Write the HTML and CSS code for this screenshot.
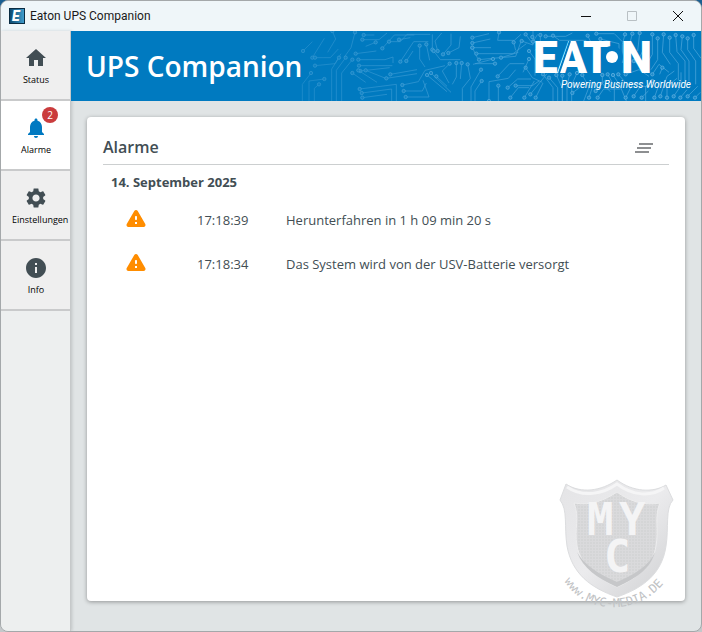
FILE: index.html
```
<!DOCTYPE html>
<html lang="de">
  <head>
    <meta charset="UTF-8" />
    <meta name="viewport" content="width=device-width, initial-scale=1.0" />
    <title>Eaton UPS Companion</title>
    <link rel="stylesheet" href="styles.css">
  </head>
  <body>
    <div class="window">
      <div class="titlebar">
        <svg class="app-icon" viewBox="0 0 16 16" aria-hidden="true">
          <defs>
            <linearGradient id="appBlue" x1="0" y1="0" x2="1" y2="0">
              <stop offset="0" stop-color="#0d4a70" />
              <stop offset="1" stop-color="#3f9bcb" />
            </linearGradient>
          </defs>
          <rect width="16" height="16" fill="#0a2c42" />
          <rect x="1" y="1" width="14" height="14" fill="url(#appBlue)" />
          <text x="3" y="13" class="app-letter">E</text>
        </svg>
        <span class="titlebar-text">Eaton UPS Companion</span>
        <div class="window-buttons">
          <button type="button" aria-label="Minimieren">
            <svg viewBox="0 0 12 12"><path d="M1 6.500h10" /></svg>
          </button>
          <button type="button" aria-label="Maximieren" disabled>
            <svg viewBox="0 0 12 12"><path d="M1.500 1.500h9v9h-9z" /></svg>
          </button>
          <button type="button" aria-label="Schließen">
            <svg viewBox="0 0 12 12"><path d="M1 1l10 10M11 1L1 11" /></svg>
          </button>
        </div>
      </div>

      <div class="layout">
        <nav class="sidebar">
          <a href="#status" class="nav-item">
            <svg class="icon" viewBox="0 0 24 24"><path d="M10 20v-6h4v6h5v-8h3L12 3 2 12h3v8z" /></svg>
            <span class="nav-label">Status</span>
          </a>
          <a href="#alarme" class="nav-item active">
            <svg class="icon" viewBox="0 0 24 24"><path d="M12 22c1.100 0 2-.9 2-2h-4c0 1.100.89 2 2 2zm6-6v-5c0-3.070-1.640-5.640-4.500-6.320V4c0-.83-.67-1.500-1.500-1.500s-1.500.67-1.500 1.500v.68C7.630 5.360 6 7.920 6 11v5l-2 2v1h16v-1l-2-2z" /></svg>
            <span class="nav-label">Alarme</span>
            <span class="badge">2</span>
          </a>
          <a href="#einstellungen" class="nav-item">
            <svg class="icon" viewBox="0 0 24 24"><path d="M19.140 12.940c.04-.3.060-.61.060-.94 0-.32-.020-.64-.070-.94l2.030-1.580c.18-.14.23-.41.12-.61l-1.920-3.320c-.12-.22-.37-.29-.59-.22l-2.390.96c-.5-.38-1.030-.7-1.620-.94l-.36-2.540c-.040-.24-.24-.41-.48-.41h-3.840c-.24 0-.43.17-.47.41l-.36 2.540c-.59.24-1.130.57-1.620.94l-2.390-.96c-.22-.080-.47 0-.59.22L2.740 8.870c-.12.21-.080.47.12.61l2.030 1.580c-.050.3-.090.63-.090.94s.020.64.070.94l-2.030 1.580c-.18.14-.23.41-.12.61l1.920 3.320c.12.22.37.29.59.22l2.390-.96c.5.38 1.030.7 1.620.94l.36 2.540c.050.24.24.41.48.41h3.840c.24 0 .44-.17.47-.41l.36-2.540c.59-.24 1.130-.56 1.620-.94l2.390.96c.22.080.47 0 .59-.22l1.920-3.320c.12-.22.070-.47-.12-.61l-2.010-1.580zM12 15.600c-1.980 0-3.600-1.620-3.600-3.600s1.620-3.600 3.600-3.600 3.600 1.620 3.600 3.600-1.620 3.600-3.600 3.600z" /></svg>
            <span class="nav-label">Einstellungen</span>
          </a>
          <a href="#info" class="nav-item">
            <svg class="icon" viewBox="0 0 24 24"><path d="M12 2C6.480 2 2 6.480 2 12s4.480 10 10 10 10-4.480 10-10S17.520 2 12 2zm1 15h-2v-6h2v6zm0-8h-2V7h2v2z" /></svg>
            <span class="nav-label">Info</span>
          </a>
        </nav>

        <div class="content">
          <header class="banner">
            <!-- circuit board lines, fading out to the left -->
            <svg class="circuit" viewBox="0 0 1206 210" preserveAspectRatio="xMaxYMid slice" aria-hidden="true">
              <defs>
                <marker id="node" markerUnits="userSpaceOnUse" markerWidth="16" markerHeight="16" refX="8" refY="8">
                  <circle cx="8" cy="8" r="5" />
                </marker>
                <linearGradient id="fade" x1="0" x2="1" y1="0" y2="0">
                  <stop offset="0" stop-color="#777" />
                  <stop offset="0.4" stop-color="#ccc" />
                  <stop offset="0.8" stop-color="#fff" />
                </linearGradient>
                <mask id="fadeMask" maskUnits="userSpaceOnUse" x="0" y="0" width="1206" height="210">
                  <rect width="1206" height="210" fill="url(#fade)" />
                </mask>
              </defs>
              <g mask="url(#fadeMask)" class="traces">
                <path d="M12 60L40 32" /><path d="M40 80L76 22" /><path d="M48 80h46l24-26" />
                <path d="M48 104l60-6 18-30" /><path d="M100 0l10 24-24 40" /><path d="M168 4l-12 46-20 28" />
                <path d="M120 80l-22 34v96" /><path d="M140 80l-28 38v92" /><path d="M160 86l-32 40v84" />
                <path d="M36 126L10 160v50" /><path d="M76 144L30 150v60" /><path d="M60 160l-14 12v38" />
                <path d="M190 26h50l24-20" /><path d="M194 12h32" /><path d="M170 68l62-8" />
                <path d="M230 34l-30 12" /><path d="M250 52l36-40h60" /><path d="M270 32h34l20-22h70" />
                <path d="M300 26l34-6" /><path d="M178 86h80l24-8v18" /><path d="M180 104h100" />
                <path d="M184 120l88-10" /><path d="M304 92l40-60h44" /><path d="M322 90l20-30" />
                <path d="M160 126l40 28" /><path d="M178 118l56 36" /><path d="M200 118l60 24" />
                <path d="M274 130l80-14" /><path d="M262 142l92-14" /><path d="M310 162l48-10 20-34 60-14" />
                <path d="M314 180h56l12-24" /><path d="M182 174l110-14v50" /><path d="M188 186l90-12v36" />
                <path d="M190 200l74-10" /><path d="M320 198h70l-18-50" /><path d="M362 44v40l16 24" />
                <path d="M382 40l10 48" /><path d="M400 56V10" /><path d="M416 60l-8-30 20-24" />
                <path d="M432 70l24-28V8" /><path d="M448 66l32-16 4-34" /><path d="M404 60l20 26h60" />
                <path d="M384 132l60 50" /><path d="M396 126l60 58" /><path d="M412 136l32 30" />
                <path d="M452 98l-22 22 20 36" /><path d="M472 96v42l-12 22" /><path d="M488 96l-4 48" />
                <path d="M506 100l8 42-24 30v38" /><path d="M520 20l50-12" /><path d="M520 36l54-12" />
                <path d="M520 50h56" /><path d="M520 50l16 32" /><path d="M532 68h110l40-30" />
                <path d="M540 86l40-4 70-6 16-44" /><path d="M546 116l-30 52v42" /><path d="M582 84l-60 16" />
                <path d="M588 98h-60" /><path d="M596 136l36-38h44" /><path d="M606 80l52-16" />
                <path d="M548 150l-20 30v30" /><path d="M570 210v-58l58-10 22-26" /><path d="M598 164v46" />
                <path d="M626 170l30-26h40" /><path d="M634 200l24-30h32" /><path d="M650 164h50l20-14" />
                <path d="M600 4l-4 24h50l20-18" /><path d="M644 34l6 24" /><path d="M668 30l34 12V0" />
                <path d="M680 10l16 22" /><path d="M702 32l14-22" /><path d="M690 60l18 24v50" />
                <path d="M680 110l20 30 30 14" /><path d="M676 200l30-50" /><path d="M694 190l50-62" />
                <path d="M710 200l22-44" /><path d="M724 12v30l-16 16" /><path d="M740 16h60l20-10" />
                <path d="M762 14l20 14h80" /><path d="M732 130l30 40v40" /><path d="M750 140l26 30v40" />
                <path d="M772 132l18 40v38" /><path d="M790 134v76" /><path d="M812 130l-8 34v46" />
                <path d="M834 126l-16 36v48" /><path d="M850 132l20 36-16 42" /><path d="M866 14l10 20 40 6" />
                <path d="M892 8h54l24 24" /><path d="M904 24l56 14v50" /><path d="M910 132v26l24 24" />
                <path d="M926 130l20 36v44" /><path d="M942 132l20 30 20 48" /><path d="M896 200l18-26h50" />
                <path d="M890 180l30-34" /><path d="M958 130l26 30h40" /><path d="M978 10l-8 30v56" />
                <path d="M1000 8l-8 32 16 30" /><path d="M1022 6l-6 54" /><path d="M980 130l40-14 30 20" />
                <path d="M1060 10v60l-14 24" /><path d="M1076 22v64l-20 30" /><path d="M1094 10l-4 54 24 36" />
                <path d="M1112 20v44l26 34v50" /><path d="M1130 12l4 50 24 28v60" /><path d="M1150 16l-4 40 24 34v60" />
                <path d="M1166 22v34l24 34v70" /><path d="M1184 12v40l22 30" /><path d="M1060 130l20-30 30 24" />
                <path d="M1066 200l18-50" /><path d="M1084 196l20-60 22-16" /><path d="M1104 200v-34l30-24" />
                <path d="M1124 196l22-32v-40" /><path d="M1144 200l20-24" /><path d="M1166 196l30-30" />
                <path d="M1188 200l16-16" /><path d="M980 200l22-44h30" /><path d="M1004 196l20-30h30" />
                <path d="M1028 200l20-20" /><path d="M820 186l26-20" /><path d="M870 200l16-50" />
                <path d="M700 18l34 50v40" /><path d="M690 84l-18 40" /><path d="M1040 40l-20 44 20 16" />
                <path d="M1060 150l-20 16v44" /><path d="M1004 90l24 16" /><path d="M1090 110l-8 20" />
              </g>
            </svg>
            <h1>UPS Companion</h1>
            <div class="brand">
              <svg class="brand-logo" viewBox="0 0 118 32" role="img" aria-label="Eaton">
                <text x="-2" y="32">E</text>
                <text x="22" y="32">A</text>
                <text x="48" y="32">T</text>
                <path class="brand-cut" d="M35 0L24 32" />
                <circle class="brand-ring" cx="77" cy="16" r="11" />
                <circle class="brand-dot" cx="77" cy="16" r="6" />
                <text x="86" y="32">N</text>
              </svg>
              <span class="brand-claim">Powering Business Worldwide</span>
            </div>
          </header>

          <main class="page">
            <section class="card">
              <div class="card-header">
                <h2>Alarme</h2>
                <button type="button" class="clear-button" aria-label="Alle Alarme löschen">
                  <svg viewBox="0 0 24 24"><path d="M5 13h14v-2H5v2zm-2 4h14v-2H3v2zM7 7v2h14V7H7z" /></svg>
                </button>
              </div>
              <table class="alarms">
                <caption>14. September 2025</caption>
                <tbody>
                  <tr>
                    <td class="alarm-icon">
                      <svg viewBox="0 0 24 24"><path d="M4.470 21h15.060c1.540 0 2.500-1.670 1.730-3L13.730 4.990c-.77-1.330-2.690-1.330-3.460 0L2.740 18c-.77 1.330.19 3 1.730 3zM12 14c-.55 0-1-.45-1-1v-2c0-.55.45-1 1-1s1 .45 1 1v2c0 .55-.45 1-1 1zm1 4h-2v-2h2v2z" /></svg>
                    </td>
                    <td class="alarm-time">17:18:39</td>
                    <td>Herunterfahren in 1 h 09 min 20 s</td>
                  </tr>
                  <tr>
                    <td class="alarm-icon">
                      <svg viewBox="0 0 24 24"><path d="M4.470 21h15.060c1.540 0 2.500-1.670 1.730-3L13.730 4.990c-.77-1.330-2.690-1.330-3.460 0L2.740 18c-.77 1.330.19 3 1.730 3zM12 14c-.55 0-1-.45-1-1v-2c0-.55.45-1 1-1s1 .45 1 1v2c0 .55-.45 1-1 1zm1 4h-2v-2h2v2z" /></svg>
                    </td>
                    <td class="alarm-time">17:18:34</td>
                    <td>Das System wird von der USV-Batterie versorgt</td>
                  </tr>
                </tbody>
              </table>
            </section>
          </main>
        </div>
      </div>

      <!-- watermark -->
      <svg class="watermark" viewBox="0 0 120 136" role="img" aria-label="myc-media.de">
        <defs>
          <linearGradient id="rim" x1="0" y1="0" x2="1" y2="1">
            <stop offset="0" stop-color="#e4e4e6" />
            <stop offset="0.5" stop-color="#ebebed" />
            <stop offset="1" stop-color="#cfd0d2" />
          </linearGradient>
          <pattern id="mesh" width="3" height="3" patternUnits="userSpaceOnUse">
            <rect width="3" height="3" fill="#dadadc" />
            <circle cx="1" cy="1" r="0.8" fill="#cecfd0" />
          </pattern>
          <path id="claimArc" d="M7 105C30 142 90 140 113 98" />
        </defs>
        <path d="M9 8C24 18 44 15 60 4C76 16 96 17 109 9L116 24C108 32 112 52 109 70C105 98 86 112 60 121C34 112 15 98 10 70C7 50 11 34 3 24Z" fill="url(#rim)" stroke="#dcdddf" />
        <path d="M10 11C26 22 46 18 60 8C76 20 94 21 107 12" fill="none" stroke="#f5f5f6" stroke-width="3" />
        <path d="M17 27C34 30 48 24 60 16C72 25 87 30 103 27C97 40 102 54 99 70C96 90 80 102 60 111C40 102 24 90 20 70C17 52 23 42 17 27Z" fill="url(#mesh)" stroke="#ededee" />
        <path d="M20 76C26 92 40 102 60 111C80 102 94 92 98 76C92 90 78 98 60 106C42 98 28 90 20 76Z" fill="#c6c7c9" />
        <g class="shield-letters">
          <text x="30" y="59">M</text>
          <text x="62" y="59">Y</text>
          <text x="47" y="96">C</text>
        </g>
        <text class="shield-claim"><textPath href="#claimArc">www.MYC-MEDIA.DE</textPath></text>
      </svg>
    </div>
  </body>
</html>
```

FILE: styles.css
```
* {
  box-sizing: border-box;
}
body {
  margin: 0;
  font-family: "Open Sans", "Noto Sans", sans-serif;
  font-size: 13px;
  color: #424e54;
  background: linear-gradient(#1b5f91 0 11%, #b9bdc0 11% 76%, #285680 76% 91%, #c4c8ca 91%);
}
.window {
  position: relative;
  display: flex;
  flex-direction: column;
  min-height: 100vh;
  border: 1px solid #a4a8aa;
  border-radius: 8px;
  overflow: hidden;
  background-color: #e0e4e5;
}
.titlebar {
  display: flex;
  align-items: center;
  height: 30px;
  padding-left: 8px;
  background-color: #eff6f9;
  color: #1a1a1a;
}
.app-icon {
  width: 16px;
  height: 16px;
}
.app-letter {
  font: italic 900 14px "Roboto", sans-serif;
  fill: #fff;
}
.titlebar-text {
  flex: 1;
  margin-left: 5px;
  font-family: "Roboto", sans-serif;
  font-size: 12px;
}
.window-buttons {
  display: flex;
}
.window-buttons button {
  display: flex;
  align-items: center;
  justify-content: center;
  width: 46px;
  height: 30px;
  padding: 0;
  border: none;
  background: none;
}
.window-buttons svg {
  width: 12px;
  height: 12px;
  fill: none;
  stroke: #111;
}
.window-buttons button:disabled svg {
  stroke: #b9c0c4;
}
.layout {
  display: flex;
  flex: 1;
}

.sidebar {
  flex: 0 0 70px;
  background-color: #edefef;
  border-right: 1px solid #c6c9ca;
  box-shadow: 1px 0 3px rgba(0, 0, 0, 0.15);
}
.nav-item {
  position: relative;
  display: flex;
  flex-direction: column;
  align-items: center;
  height: 70px;
  padding: 15px 0 0 1px;
  border-bottom: 2px solid #c9cacb;
  background-color: #efefef;
  color: #000;
  font-size: 9px;
  line-height: 20px;
  text-decoration: none;
}
.nav-item.active {
  background-color: #fff;
}
/* long labels run out to the right */
.nav-label {
  width: 48px;
  text-align: center;
  white-space: nowrap;
}
.icon {
  width: 24px;
  height: 24px;
  fill: #424e54;
}
.active .icon {
  fill: #0079c1;
}
.badge {
  position: absolute;
  top: 6px;
  right: 12px;
  width: 16px;
  height: 16px;
  border-radius: 50%;
  background-color: #ca3c3d;
  color: #fff;
  font-size: 10px;
  line-height: 16px;
  text-align: center;
}

.content {
  display: flex;
  flex: 1;
  flex-direction: column;
}
.banner {
  position: relative;
  display: flex;
  align-items: center;
  justify-content: space-between;
  height: 70px;
  padding: 0 10px 0 15px;
  background-color: #007ac0;
  color: #fff;
  overflow: hidden;
}
.circuit {
  position: absolute;
  top: 0;
  right: 0;
  height: 100%;
}
.traces path {
  fill: none;
  stroke: #55abde;
  stroke-width: 2;
  marker-start: url(#node);
}
.circuit marker circle {
  fill: #1f8bcb;
  stroke: #6cb8e4;
  stroke-width: 2;
}
.banner h1 {
  position: relative;
  margin: 0;
  font-size: 28px;
  font-weight: 600;
}
.brand {
  position: relative;
  display: flex;
  flex-direction: column;
  align-items: flex-end;
}
.brand-logo {
  width: 118px;
  height: 32px;
  margin-right: 38px;
  font: 900 44px "Roboto", sans-serif;
  fill: #fff;
  overflow: visible;
}
.brand-cut {
  fill: none;
  stroke: #0079c1;
  stroke-width: 2;
}
.brand-ring {
  fill: #0079c1;
}
.brand-dot {
  fill: #fff;
}
.brand-claim {
  margin-top: 5px;
  font: italic 10px/14px "Roboto", sans-serif;
}

.page {
  display: flex;
  flex: 1;
  padding: 16px 16px 30px;
}
.card {
  flex: 1;
  padding: 16px;
  border-radius: 4px;
  background-color: #fff;
  box-shadow: 0 1px 4px rgba(0, 0, 0, 0.35);
}
.card-header {
  display: flex;
  align-items: center;
  justify-content: space-between;
  height: 32px;
  padding: 0 13px 2px 0;
  border-bottom: 1px solid #cccfd0;
}
.card-header h2 {
  margin: 0;
  padding-bottom: 2px;
  font-size: 16px;
  font-weight: 600;
  line-height: 24px;
}
.clear-button {
  display: flex;
  padding: 0;
  border: none;
  background: none;
}
.clear-button svg {
  width: 24px;
  height: 24px;
  fill: #8d8f91;
}
.alarms {
  width: 100%;
  border-collapse: collapse;
}
.alarms caption {
  padding: 7px 8px 6px;
  font-weight: 700;
  line-height: 20px;
  text-align: left;
}
.alarms td {
  height: 44px;
  padding: 0;
}
.alarms .alarm-icon {
  width: 94px;
  padding: 0 0 4px 21px;
}
.alarm-icon svg {
  display: block;
  width: 24px;
  height: 24px;
  fill: #ff8d00;
}
.alarms .alarm-time {
  width: 89px;
}

.watermark {
  position: absolute;
  right: 24px;
  bottom: 19px;
  width: 120px;
  height: 136px;
  pointer-events: none;
}
.shield-letters {
  font: 700 44px "DejaVu Sans Mono", monospace;
  fill: #f4f4f5;
}
.shield-claim {
  font: 12px "DejaVu Sans Mono", monospace;
  fill: #bfc2c4;
}
```
